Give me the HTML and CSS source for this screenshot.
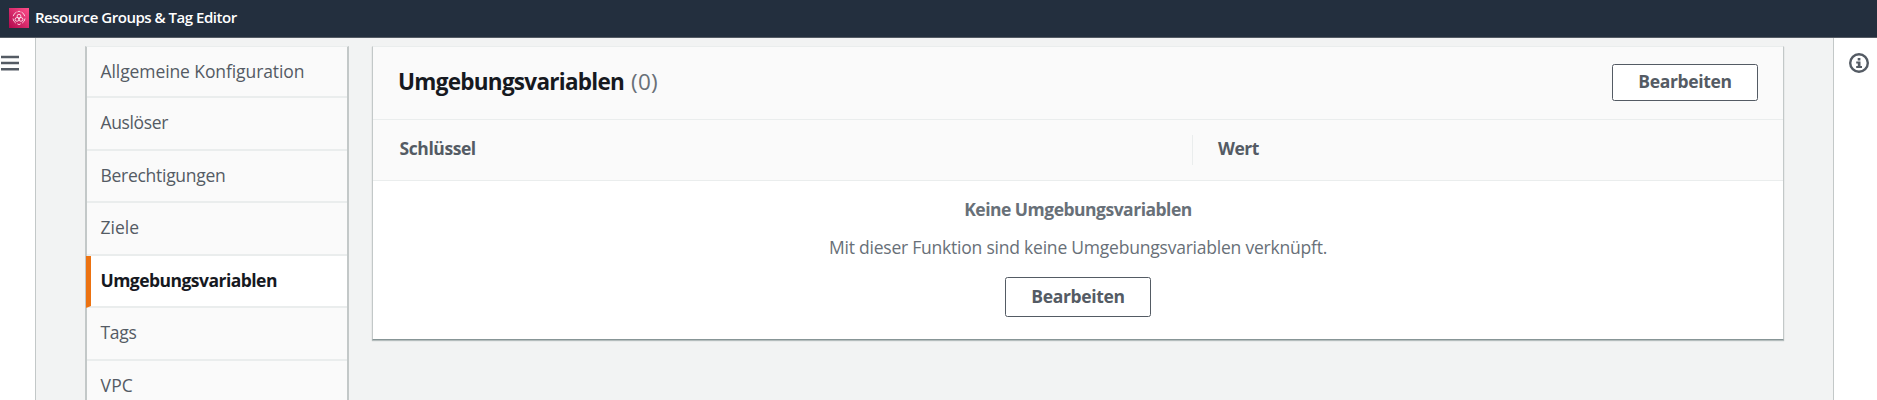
FILE: index.html
```
<!DOCTYPE html>
<html lang="de">
<head>
<meta charset="utf-8">
<title>Umgebungsvariablen</title>
<link rel="stylesheet" href="styles.css">
</head>
<body>
<header class="topbar">
  <svg class="service-icon" width="20" height="20" viewBox="0 0 20 20">
    <defs><linearGradient id="pink" x1="0" y1="1" x2="1" y2="0"><stop offset="0" stop-color="#b0084d"/><stop offset="1" stop-color="#ff4f8b"/></linearGradient></defs>
    <rect width="20" height="20" fill="url(#pink)"/>
    <g fill="none" stroke="#fff" stroke-opacity=".85" stroke-width=".9">
      <path d="M8.500 3.900 10 3.200l1.500.7M12.500 4.100A6.200 6.200 0 0 1 15.800 8.200M16 10.500a6 6 0 0 1-2.800 4.600M11.700 15.800 10 16.700l-1.700-.9M6.800 15.100A6 6 0 0 1 4 10.500M4.200 8.200A6.200 6.200 0 0 1 7.500 4.100"/>
      <circle cx="10" cy="8.200" r="1.900"/><circle cx="8" cy="11.400" r="1.900"/><circle cx="12" cy="11.400" r="1.900"/>
    </g>
  </svg>
  <span class="service-name">Resource Groups &amp; Tag Editor</span>
</header>
<div class="shell">
  <aside class="rail rail-left">
    <svg width="19" height="16" viewBox="0 0 19 16"><path d="M1 2h18M1 8h18M1 14.200h18" stroke="#545b64" stroke-width="2.400"/></svg>
  </aside>
  <main class="content">
    <nav class="tabs">
      <a class="tab t-general">Allgemeine Konfiguration</a>
      <a class="tab t-trigger">Auslöser</a>
      <a class="tab t-perm">Berechtigungen</a>
      <a class="tab t-dest">Ziele</a>
      <a class="tab active">Umgebungsvariablen</a>
      <a class="tab t-tags">Tags</a>
      <a class="tab t-vpc">VPC</a>
    </nav>
    <section class="panel">
      <div class="panel-head">
        <h2 class="title">Umgebungsvariablen</h2><span class="count">(0)</span>
        <button class="button button-head">Bearbeiten</button>
      </div>
      <div class="columns">
        <div class="column column-key">Schlüssel</div>
        <div class="column column-value">Wert</div>
      </div>
      <div class="empty">
        <b class="empty-title">Keine Umgebungsvariablen</b>
        <p class="empty-text">Mit dieser Funktion sind keine Umgebungsvariablen verknüpft.</p>
        <button class="button button-empty">Bearbeiten</button>
      </div>
    </section>
  </main>
  <aside class="rail rail-right">
    <svg width="20" height="20" viewBox="0 0 20 20"><circle cx="10" cy="10" r="8.800" fill="none" stroke="#545b64" stroke-width="2.400"/><path d="M8.700 5h2.700v2.500H8.700zM7.200 8.500h4.300v4.500H13v2H7.200v-2h1.600v-2.500H7.200z" fill="#545b64"/></svg>
  </aside>
</div>
</body>
</html>
```
FILE: styles.css
```
* { box-sizing: border-box; }
body {
  margin: 0;
  height: 400px;
  overflow: hidden;
  background: #f2f3f3;
  color: #545b64;
  font: 17.5px/24px "Open Sans", "Noto Sans", sans-serif;
}
.topbar {
  display: flex;
  align-items: center;
  gap: 6px;
  height: 38px;
  padding: 0 0 2px 9px;
  background: #232f3e;
  border-bottom: 1px solid #545b64;
}
.service-name { margin-top: -1px; color: #fff; font-size: 15px; font-weight: 560; letter-spacing: -.48px; }
.shell { display: flex; height: 362px; }
.rail { flex: none; background: #fff; }
.rail-left { width: 36px; padding-top: 17px; border-right: 1px solid #c3c8c8; }
.rail-right { width: 44px; padding: 15px 0 0 15px; border-left: 1px solid #c3c8c8; }
.rail svg { display: block; }
.content { flex: 1; display: flex; align-items: flex-start; gap: 23px; padding: 8px 49px 0 49px; }
.tabs {
  width: 264px;
  height: 354px;
  background: #fafafa;
  border: 1px solid #d5dbdb;
  border-left: 2px solid #c3c8c8;
  border-right: 2px solid #c3c8c8;
  border-top-color: #eaeded;
  border-bottom: 0;
}
.tab {
  display: block;
  height: 52.5px;
  padding: 12px 0 0 13.5px;
  border-bottom: 2px solid #eaeded;
}
.tab:first-child { height: 51px; padding-top: 11.5px; }
.tab:last-child { height: 39px; border-bottom: 0; }
.t-general { letter-spacing: -.09px; }
.t-trigger { letter-spacing: -.36px; }
.t-perm { letter-spacing: -.28px; }
.t-tags { letter-spacing: -.3px; }
.t-vpc { letter-spacing: .2px; }
.active {
  margin-left: -1px;
  padding-left: 9.5px;
  background: #fff;
  border-left: 5px solid #ec7211;
  color: #16191f;
  font-weight: 660;
  letter-spacing: -.53px;
}
.panel {
  flex: 1;
  height: 294px;
  background: #fff;
  border: 1px solid #c3c8c8;
  border-top-color: #eaeded;
  border-bottom: 1px solid #879596;
  box-shadow: 0 1px 1px #b5bdbd;
}
.panel-head {
  display: flex;
  align-items: center;
  height: 73px;
  padding: 0 25px 2px 25px;
  background: #fafafa;
  border-bottom: 1px solid #eaeded;
}
.title { margin: 0 7px 0 0; color: #16191f; font-size: 22.5px; font-weight: 660; letter-spacing: -.72px; }
.count { color: #687078; font-size: 22.5px; letter-spacing: .2px; }
.button {
  display: block;
  width: 146px;
  padding: 0 0 2px;
  background: #fff;
  border: 1px solid #545b64;
  border-radius: 2.5px;
  color: #545b64;
  font: 670 17.5px/24px "Open Sans", "Noto Sans", sans-serif;
  letter-spacing: -.33px;
}
.button-head { height: 37px; margin-left: auto; }
.button-empty { height: 40px; }
.columns { display: flex; align-items: center; height: 61px; background: #fafafa; border-bottom: 1px solid #eaeded; font-weight: 670; }
.column { height: 30px; line-height: 27px; }
.column-key { width: 820px; padding-left: 26.5px; border-right: 1px solid #eaeded; letter-spacing: -.42px; }
.column-value { padding-left: 25px; letter-spacing: -.5px; }
.empty { display: flex; flex-direction: column; align-items: center; padding-top: 16px; color: #687078; }
.empty-title { font-weight: 660; letter-spacing: -.5px; }
.empty-text { margin: 14px 0 18px; letter-spacing: -.22px; }
```
